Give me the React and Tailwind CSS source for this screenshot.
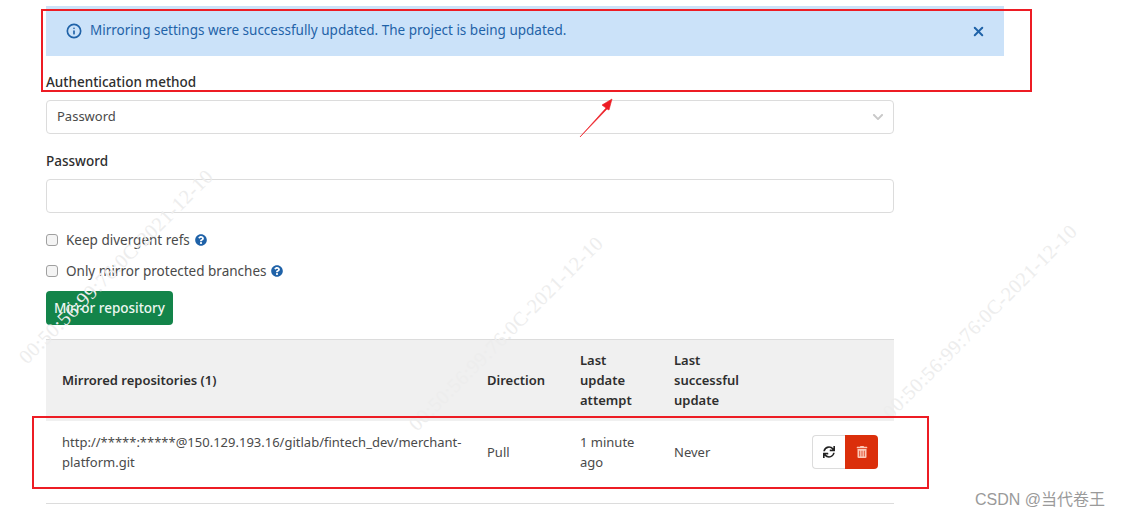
// App.jsx
// Mirroring settings form with the mirrored repositories table

import React from 'react';
import { FaChevronDown, FaQuestionCircle, FaSync, FaTrashAlt } from 'react-icons/fa';
import { Info, X } from 'lucide-react';

const HelpCheck = ({ label }) => (
  <label className="flex items-center h-5 text-[13.5px] text-[#4a4a4a]">
    <span className="w-3 h-3 rounded-[3px] border border-[#a0a0a0] bg-[#f4f4f4] mr-2" />
    <span>{label}</span>
    <FaQuestionCircle className="ml-[5px] text-[12px] text-[#1f62a8]" />
  </label>
);

const Watermark = ({ className, children }) => (
  <span className={`absolute whitespace-nowrap text-[20px] text-[#ededed] -rotate-45 origin-left font-['Liberation_Serif',serif] tracking-[0.5px] pointer-events-none ${className}`}>
    {children}
  </span>
);

const App = () => {
  return (
    <div className="relative w-[1142px] h-[518px] overflow-hidden bg-white pl-[46px] pt-[6px] font-['Noto_Sans',sans-serif] text-[13px] text-[#2e2e2e]">
      {/* Flash notice */}
      <div className="w-[958px] h-[50px] bg-[#cbe2f9] flex items-center -mt-0 pl-[20px] pr-[18px] text-[#1f62a8] text-[13.5px]">
        <Info size={16} strokeWidth={2.5} className="mr-2" />
        <span className="flex-1 -mt-[2px]">Mirroring settings were successfully updated. The project is being updated.</span>
        <X size={15} strokeWidth={3.2} />
      </div>

      <div className="w-[848px]">
        <div className="mt-[17px] h-[18px] leading-[18px] font-medium text-[13.5px]">Authentication method</div>
        <div className="mt-[9px] h-[34px] rounded-[4px] border border-[#dcdcdc] flex items-center justify-between pl-[10px] pr-[9px] text-[#4a4a4a]">
          <span>Password</span>
          <FaChevronDown className="text-[12px] text-[#c9c9c9]" />
        </div>

        <div className="mt-[18px] h-[18px] leading-[18px] font-medium text-[13.5px]">Password</div>
        <div className="mt-[9px] h-[34px] rounded-[4px] border border-[#dcdcdc]" />

        <div className="mt-[17px] flex flex-col gap-[11px]">
          <HelpCheck label="Keep divergent refs" />
          <HelpCheck label="Only mirror protected branches" />
        </div>

        <button className="mt-[10px] block h-[34px] w-[127px] rounded-[4px] bg-[#13844a] text-[#eef8f2] text-[13.5px] font-medium">Mirror repository</button>

        <table className="mt-[14px] w-full border-collapse table-fixed">
          <thead>
            <tr className="h-[81px] bg-[#f0f0f0] border-t border-[#dcdcdc] text-left text-[13px] font-semibold leading-[20px]">
              <th className="w-[425px] pl-4 font-semibold">Mirrored repositories (1)</th>
              <th className="w-[93px] pl-4 font-semibold">Direction</th>
              <th className="w-[94px] pl-4 font-semibold">Last<br />update<br />attempt</th>
              <th className="w-[138px] pl-4 font-semibold">Last<br />successful<br />update</th>
              <th />
            </tr>
          </thead>
          <tbody>
            <tr className="h-[62px] leading-[20px] text-[#4a4a4a]">
              <td className="pl-4 pr-2">http://*****:*****@150.129.193.16/gitlab/fintech_dev/merchant-platform.git</td>
              <td className="pl-4">Pull</td>
              <td className="pl-4">1 minute ago</td>
              <td className="pl-4">Never</td>
              <td className="pr-4">
                <div className="flex justify-end">
                  <button className="w-[33px] h-[34px] flex items-center justify-center rounded-l-[4px] border border-r-0 border-[#dcdcdc] bg-white">
                    <FaSync className="text-[12px] text-[#222222]" />
                  </button>
                  <button className="w-[33px] h-[34px] flex items-center justify-center rounded-r-[4px] bg-[#db2f0b]">
                    <FaTrashAlt className="text-[12px] text-[#fbc9b8]" />
                  </button>
                </div>
              </td>
            </tr>
          </tbody>
        </table>

        <div className="mt-5 border-t border-[#dcdcdc]" />
      </div>

      {/* Watermarks stamped over the capture */}
      <Watermark className="left-[22px] top-[345px]">00:50:56:99:76:0C-2021-12-10</Watermark>
      <Watermark className="left-[412px] top-[412px]">00:50:56:99:76:0C-2021-12-10</Watermark>
      <Watermark className="left-[886px] top-[400px]">00:50:56:99:76:0C-2021-12-10</Watermark>

      {/* Red annotations */}
      <div className="absolute left-[41px] top-[9px] w-[991px] h-[83px] border-2 border-[#ed1c24]" />
      <div className="absolute left-[32px] top-[416px] w-[897px] h-[73px] border-2 border-[#ed1c24]" />
      <svg className="absolute left-[575px] top-[95px]" width="42" height="46" viewBox="0 0 42 46">
        <path d="M5 42 L31 13 L27 10 L37 4 L34 15 L32 14 Z" fill="#ed1c24" stroke="#ed1c24" strokeWidth="0.6" />
      </svg>

      <span className="absolute left-[975px] top-[490px] text-[16px] leading-[20px] text-[#9a9a9a] font-['Liberation_Sans','Noto_Sans_CJK_SC',sans-serif] bg-white">CSDN @当代卷王</span>
    </div>
  );
};

export default App;
